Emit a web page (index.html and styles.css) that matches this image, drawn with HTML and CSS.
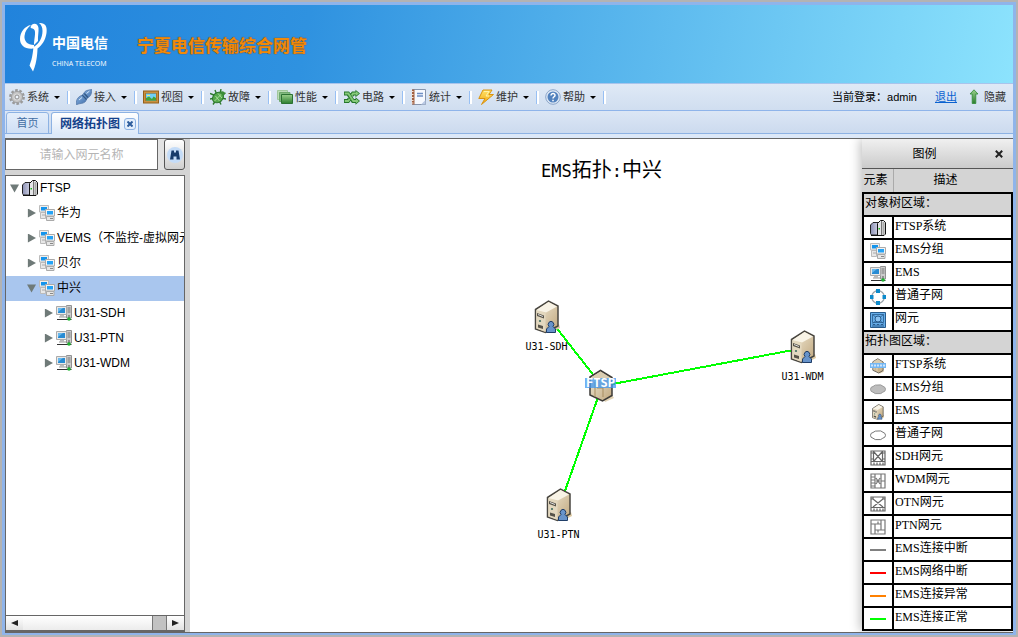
FILE: index.html
```html
<!DOCTYPE html>
<html lang="zh-CN">
<head>
<meta charset="utf-8">
<title>宁夏电信传输综合网管</title>
<link rel="stylesheet" href="styles.css">
</head>
<body>
<svg class="sprite" width="0" height="0" aria-hidden="true">
  <defs>
    <linearGradient id="beige" x1="0" y1="0" x2="1" y2="1"><stop offset="0" stop-color="#f3ecda"/><stop offset="1" stop-color="#bfa67c"/></linearGradient>
    <linearGradient id="steel" x1="0" y1="0" x2="1" y2="0"><stop offset="0" stop-color="#8b90b4"/><stop offset="1" stop-color="#d8daea"/></linearGradient>
    <linearGradient id="green" x1="0" y1="0" x2="0" y2="1"><stop offset="0" stop-color="#9ad08c"/><stop offset="1" stop-color="#2b7d2e"/></linearGradient>
    <linearGradient id="blue" x1="0" y1="0" x2="1" y2="1"><stop offset="0" stop-color="#9cc3ee"/><stop offset="1" stop-color="#2f5f9f"/></linearGradient>
    <linearGradient id="gold" x1="0" y1="0" x2="0" y2="1"><stop offset="0" stop-color="#ffe36a"/><stop offset="1" stop-color="#f2a50c"/></linearGradient>
  </defs>
  <symbol id="i-gear" viewBox="0 0 16 16">
    <circle cx="8" cy="8" r="6.6" fill="none" stroke="#9a9a9a" stroke-width="2.6" stroke-dasharray="2.6 1.55"/>
    <circle cx="8" cy="8" r="5.6" fill="#c4c4c4" stroke="#a0a0a0"/>
    <circle cx="8" cy="8" r="3.6" fill="#d9d9d9"/><circle cx="8" cy="8" r="2" fill="#eef4fb" stroke="#8f8f8f"/>
  </symbol>
  <symbol id="i-plug" viewBox="0 0 16 16">
    <path d="M.3 15.700C0 12 1 9 4 7.200L6.500 6 9 2.500C11 .8 14 1.200 15.700.300c0 2.500-.2 5-1.900 7L11 9.500l-1.500 3C7 15 4 14 .3 15.700z" fill="url(#blue)" stroke="#5579a8" stroke-width=".8"/>
    <path d="M6.300 6.200 10.500 10.500M8.300 4.500l3.700 4" stroke="#315784" stroke-width="1.200"/><path d="M10.500 4.500 13.500 2M3 11l3-2.500" stroke="#d5e7fb"/>
  </symbol>
  <symbol id="i-view" viewBox="0 0 16 16">
    <path d="M0 1.500h16v13H0z" fill="#94601c"/><path d="M1 2.500h14v11H1z" fill="#c9913f"/><path d="M2.500 4h11v8h-11z" fill="#8a5616"/>
    <path d="M3 4.500h10v7H3z" fill="#6fd0f5"/><path d="M3 11.500V9l3-1.500L9 10l1.500-2.500L13 9v2.500z" fill="#42a33b"/><path d="M4 6h3v1H4z" fill="#f3eb6c"/>
  </symbol>
  <symbol id="i-bug" viewBox="0 0 16 16">
    <path d="M0 4.500l5 2M5 1l1.500 4M11 0l-1 5M0 10l5-1M3 15.500l3-4.500M15.500 4 11 6M16 10 11 9M11 15.500l-2-4" stroke="#2d7a2c" stroke-width="1.400"/>
    <ellipse cx="8" cy="8.500" rx="6" ry="4.800" transform="rotate(-42 8 8.500)" fill="#54a84b" stroke="#2a732c"/>
    <path d="M4.500 12 11.500 5M5.500 7l4 5M8 4.500l4 4.500" stroke="#a8dc99" stroke-width="1"/>
    <path d="M10 4c1-3 5-2 5 1l-2 2z" fill="#3c8d39"/>
  </symbol>
  <symbol id="i-perf" viewBox="0 0 16 16">
    <path d="M.5 1.500h10v9H.5z" fill="#bcdcb7" stroke="#a0c79c"/><path d="M2.500 3.500h10.500v9H2.500z" fill="#82b97f" stroke="#6fa86d"/><path d="M4.500 5.500h11v9h-11z" fill="url(#green)" stroke="#2b7132"/>
  </symbol>
  <symbol id="i-shuffle" viewBox="0 0 16 16">
    <path d="M0 4.500h4l5 7.500h3M0 12h4l1.500-2M7.500 6.500 9 4.500h3" fill="none" stroke="#25762a" stroke-width="4"/>
    <path d="M11.500.8 16 4.500 11.500 8.200zM11.500 8.200 16 12l-4.500 3.700z" fill="#25762a"/>
    <path d="M.8 4.500h3.500l5 7.500h3M.8 12h3.500l1.500-2M7.700 6.500 9 4.500h3" fill="none" stroke="#86c97a" stroke-width="2"/>
    <path d="M12 2.300 15 4.500 12 6.700zM12 9.800l3 2.200-3 2.200z" fill="#86c97a"/>
  </symbol>
  <symbol id="i-report" viewBox="0 0 16 16">
    <path d="M1.500.5h13v15h-13z" fill="#f6f9ff" stroke="#8795ad"/><path d="M1 .5h2.500v15H1z" fill="#a36040"/><path d="M0 2.500h2.500M0 5.500h2.500M0 8.500h2.500M0 11.500h2.500M0 14h2.500" stroke="#efe2da"/>
    <path d="M6 4.500h6M6 7h6" stroke="#6f8fc4" stroke-width="1.400"/><path d="M10 15.500 14.500 11v4.500z" fill="#b9c9e4"/>
  </symbol>
  <symbol id="i-bolt" viewBox="0 0 16 16">
    <path d="M5 1h9l-3 4.500h4.500L3.500 15.500 7 9.500H.8z" fill="url(#gold)" stroke="#d99413"/>
    <path d="M6 2.500h5L8 7h3" fill="none" stroke="#fff3a8"/>
  </symbol>
  <symbol id="i-help" viewBox="0 0 16 16">
    <circle cx="8" cy="8" r="7.300" fill="#dfe9f6" stroke="#8aa5c9"/><circle cx="8" cy="8" r="5.500" fill="#5282be"/>
    <path d="M6 6.500C6 3.800 10.200 4 10 6.500 9.900 7.800 8 7.800 8 9.500M8 10.800v1.500" fill="none" stroke="#fff" stroke-width="1.500"/>
  </symbol>
  <symbol id="i-up" viewBox="0 0 16 16"><path d="M8 .8 12 5h-2.200v9.500H6.200V5H4z" fill="url(#green)" stroke="#2f8a35" stroke-width=".8"/></symbol>
  <symbol id="i-binoculars" viewBox="0 0 16 16">
    <circle cx="8" cy="8" r="8" fill="#c4dcf8"/><path d="M4.500 3.500H7v2h2v-2h2.500L13 12.500H9.500V9.500h-3v3H3z" fill="#173c6b"/>
  </symbol>
  <symbol id="i-system" viewBox="0 0 16 16">
    <path d="M.5 5 3 2.500h6V14L7.500 15h-6l-1-1.500z" fill="url(#steel)" stroke="#222"/>
    <path d="M7.500 3.500 10.500.5h3l2 2V14l-1.500 1.500H7.500z" fill="#e4e5e8" stroke="#111"/><path d="M11.500 1v14" stroke="#777"/><path d="M13.500 2v13" stroke="#aaa" stroke-width="2"/><path d="M8.500 8h1.500v1.500H8.500z" fill="#18b818"/>
    <path d="M1 15.500h7" stroke="#111"/>
  </symbol>
  <symbol id="i-group" viewBox="0 0 16 16">
    <path d="M.5.500h9v6.500h-9z" fill="#eee" stroke="#bcbcbc"/><path d="M2 2h6v3.500H2z" fill="#1494ec"/><path d="M1.500 7.500h5v6h-5z" fill="#e7e7e7" stroke="#bbb"/><path d="M3 10h3" stroke="#aaa"/>
    <path d="M6.500 4.500h9V11h-9z" fill="#f4f4f4" stroke="#aaa"/><path d="M8 6h6v3.500H8z" fill="#26a3f5"/><path d="M7.500 11.500h7.500v4H7.500z" fill="#e6e6e6" stroke="#aaa"/><path d="M11 13.500h3" stroke="#888"/>
  </symbol>
  <symbol id="i-ems" viewBox="0 0 16 16">
    <path d="M10.500.5h5v12.500h-5z" fill="#ccc" stroke="#929292"/><path d="M11.500 3h3M11.500 5h3M11.500 7h3" stroke="#777"/>
    <path d="M.5 1.500h10v8H.5z" fill="#e9e9e9" stroke="#aaa"/><path d="M2 3h7v5H2z" fill="#288bd3"/><path d="M2 3h5L2 7z" fill="#68b8ec"/>
    <path d="M4 10.500h4M3 12h7" stroke="#bbb" stroke-width="1.500"/><path d="M1 14.500h14.500" stroke="#333"/><path d="M13 10v5" stroke="#555"/><circle cx="13" cy="14" r="1.800" fill="#20b533"/>
  </symbol>
  <symbol id="i-subnet" viewBox="0 0 16 16">
    <circle cx="8" cy="8" r="6.300" fill="none" stroke="#9aa3aa" stroke-width="1.200"/>
    <path d="M6 0h4v4H6zM6 12h4v4H6zM0 6h3.500v4H0zM12.500 6H16v4h-3.500z" fill="#0d8acb"/>
  </symbol>
  <symbol id="i-ne" viewBox="0 0 16 16">
    <path d="M.5.500h15v15H.5z" fill="#67aeea" stroke="#285b8c"/><path d="M2.500 2.500h11v8h-11zM2.500 2.500l11 9M13.500 2.500l-11 9" fill="none" stroke="#285b8c" stroke-width=".8"/><circle cx="8" cy="7" r="3" fill="#8bc2f1" stroke="#285b8c"/><path d="M3 15v-2.500h2V15M7 15v-2.500h2V15M11 15v-2.500h2V15" fill="none" stroke="#285b8c"/>
  </symbol>
  <symbol id="i-server" viewBox="0 0 26 34">
    <path d="M19 27l6-3 1 4-8 4z" fill="#ddc9a2"/>
    <path d="M1.500 9.500 14.500 1 24 6v20l-12.500 6.500L1.500 29z" fill="url(#beige)" stroke="#484640" stroke-width="1.500"/>
    <path d="M2.500 10 14.500 2l8.500 4.500-11 6z" fill="#f8f3e6"/><path d="M11.500 13v19L2.300 28.500V10.500z" fill="#e3d8bf"/>
    <path d="M3 13l7 2.500v3L3 16zM4 24.500l5 1.500v3l-5-1.500z" fill="#575349"/><path d="M4 14.500l5 2" stroke="#ddd"/><circle cx="6" cy="21" r="1.100" fill="#3f6e61"/>
    <path d="M12.500 32.500v-3.500l2.500-2.500a2.800 3 0 1 1 4 0l2.500 2.500v3.500z" fill="#6793ca" stroke="#203e68"/>
  </symbol>
  <symbol id="i-core" viewBox="0 0 26 34">
    <path d="M15 29l9-3 2 3-9 4z" fill="#e2d3b4"/>
    <path d="M2 8 12.500 1.500 24 8.500v18L14.500 32 2 26z" fill="url(#beige)" stroke="#3d3b38" stroke-width="1.500"/>
    <path d="M3 8.500 12.500 2.500 22.500 9l-9 5z" fill="#d9cdb2"/><path d="M7 13v15M9 19h6v9" fill="none" stroke="#a78d61"/>
  </symbol>
  <symbol id="i-cloud" viewBox="0 0 16 16"><path d="M3 5.500Q5 3.500 8 4q3-.8 5 1.300 2.500.7 2.500 3t-2.700 2.900Q11 13.200 8 12.600 5 13.200 3 11.200.5 10.800.5 8.300T3 5.500z"/></symbol>
  <symbol id="i-sdh" viewBox="0 0 16 16">
    <path d="M1 1h14v14H1zM1 11.500h14M3.500 1v10M12.500 1v10M4 2l8 9M12 2l-8 9M4 15v-2.500M7 15v-2.500M10 15v-2.500M13 15v-2.500" fill="none" stroke="#666" stroke-width="1.200"/><path d="M1 3h3M12 3h3M1 9h3M12 9h3" stroke="#666"/>
  </symbol>
  <symbol id="i-wdm" viewBox="0 0 16 16"><path d="M1 1h14v14H1zM5 1v14M11 1v14M1 4h4M1 7h4M1 10h4M1 13h4M11 8h4M6 5l4 6M10 5l-4 6M6 8h4" fill="none" stroke="#777" stroke-width="1.200"/></symbol>
  <symbol id="i-otn" viewBox="0 0 16 16"><path d="M1 1h14v14H1zM1 11.500h14M3 3l10 8M13 3 3 11M4 15v-2.500M7 15v-2.500M10 15v-2.500M13 15v-2.500M1 3h2V1M13 1v2h2" fill="none" stroke="#666" stroke-width="1.200"/></symbol>
  <symbol id="i-ptn" viewBox="0 0 16 16"><path d="M1 1h14v14H1zM5 5h6v6H5zM8 5V2.500M5 5H1M11 5V1M11 11h4M5 11v4M8 11v2.500" fill="none" stroke="#777" stroke-width="1.200"/></symbol>
</svg>

<div class="app">
  <header class="banner">
    <div class="brand">
      <svg class="brand-mark" width="28" height="50" viewBox="0 0 28 50" aria-hidden="true" fill="#fff">
        <path d="M11 3C5 4 0 10 0 17c0 6.500 5 10.500 14 9.500V23C7.500 23 4 19 4.500 14 5 9 7.500 6 11 3z"/>
        <path d="M10.500 5.500C11 .5 18 0 18.500 6c.3 4-.8 8-.5 13l-4 4C14 17 16 11 14.500 8c-1-2-3-1-4-2.500z"/>
        <path d="M19 1c6-.5 8.500 3 7.500 10-1 7-4.500 12.500-9 15.500-.2 8-1.500 15-3 19L13 49.500l-3.500-6 2-6c1-4 1.500-8 2-12.500C19 22 22.500 16 22.500 9c0-3.500-1-6-3.500-8z"/>
      </svg>
      <div class="brand-text"><span class="brand-cn">中国电信</span><span class="brand-en">CHINA TELECOM</span></div>
    </div>
    <h1 class="banner-title">宁夏电信传输综合网管</h1>
  </header>

  <nav class="toolbar">
    <button class="menu"><svg class="icon"><use href="#i-gear"/></svg>系统<i class="caret"></i></button>
    <button class="menu"><svg class="icon"><use href="#i-plug"/></svg>接入<i class="caret"></i></button>
    <button class="menu"><svg class="icon"><use href="#i-view"/></svg>视图<i class="caret"></i></button>
    <button class="menu"><svg class="icon"><use href="#i-bug"/></svg>故障<i class="caret"></i></button>
    <button class="menu"><svg class="icon"><use href="#i-perf"/></svg>性能<i class="caret"></i></button>
    <button class="menu"><svg class="icon"><use href="#i-shuffle"/></svg>电路<i class="caret"></i></button>
    <button class="menu"><svg class="icon"><use href="#i-report"/></svg>统计<i class="caret"></i></button>
    <button class="menu"><svg class="icon"><use href="#i-bolt"/></svg>维护<i class="caret"></i></button>
    <button class="menu"><svg class="icon"><use href="#i-help"/></svg>帮助<i class="caret"></i></button>
    <div class="session">
      <span class="user">当前登录：admin</span>
      <a class="logout" href="#">退出</a>
      <button class="hide"><svg class="icon"><use href="#i-up"/></svg>隐藏</button>
    </div>
  </nav>

  <div class="tabs">
    <button class="tab">首页</button>
    <div class="tab tab-active"><span>网络拓扑图</span>
      <button class="tab-close" aria-label="关闭"><svg width="6" height="6" viewBox="0 0 6 6"><path d="M.5.500l5 5M5.500.500l-5 5" stroke="#2d5c9c" stroke-width="2"/></svg></button>
    </div>
  </div>

  <main class="work">
    <aside class="side">
      <form class="search">
        <input class="search-box" type="text" placeholder="请输入网元名称" aria-label="请输入网元名称">
        <button class="search-go" type="button" aria-label="搜索"><svg class="icon"><use href="#i-binoculars"/></svg></button>
      </form>
      <div class="tree-panel">
        <ul class="tree">
          <li class="node level-0"><i class="fold open"></i><svg class="icon"><use href="#i-system"/></svg>FTSP</li>
          <li class="node level-1"><i class="fold"></i><svg class="icon"><use href="#i-group"/></svg>华为</li>
          <li class="node level-1"><i class="fold"></i><svg class="icon"><use href="#i-group"/></svg>VEMS（不监控-虚拟网元</li>
          <li class="node level-1"><i class="fold"></i><svg class="icon"><use href="#i-group"/></svg>贝尔</li>
          <li class="node level-1 selected"><i class="fold open"></i><svg class="icon"><use href="#i-group"/></svg>中兴</li>
          <li class="node level-2"><i class="fold"></i><svg class="icon"><use href="#i-ems"/></svg>U31-SDH</li>
          <li class="node level-2"><i class="fold"></i><svg class="icon"><use href="#i-ems"/></svg>U31-PTN</li>
          <li class="node level-2"><i class="fold"></i><svg class="icon"><use href="#i-ems"/></svg>U31-WDM</li>
        </ul>
        <div class="scrollbar">
          <button class="scroll-end" aria-label="向左"><i class="arrow-left"></i></button>
          <div class="scroll-track"><div class="scroll-thumb"></div></div>
          <button class="scroll-end" aria-label="向右"><i class="arrow-right"></i></button>
        </div>
      </div>
    </aside>

    <section class="canvas">
      <h2 class="canvas-title"><span class="latin">EMS</span>拓扑<span class="latin">:</span>中兴</h2>
      <div class="map">
        <svg class="links" width="1" height="1"><path d="M0 0-54-69M0 0 202-38M0 0-42 119" stroke="#0f0" stroke-width="2" fill="none" shape-rendering="crispEdges"/></svg>
        <div class="device sdh"><svg class="server"><use href="#i-server"/></svg><span>U31-SDH</span></div>
        <div class="device wdm"><svg class="server"><use href="#i-server"/></svg><span>U31-WDM</span></div>
        <div class="device ptn"><svg class="server"><use href="#i-server"/></svg><span>U31-PTN</span></div>
        <div class="device core"><svg class="server"><use href="#i-core"/></svg><b class="core-label">FTSP</b></div>
      </div>

      <aside class="legend">
        <div class="legend-head"><span class="legend-name">图例</span><button class="legend-close" aria-label="关闭"><svg width="8" height="8" viewBox="0 0 8 8"><path d="M.8.800l6.400 6.400M7.200.800.8 7.200" stroke="#222" stroke-width="2"/></svg></button></div>
        <div class="legend-cols"><span class="col-icon">元素</span><span class="col-text">描述</span></div>
        <table class="legend-table">
          <tr><th colspan="2">对象树区域：</th></tr>
          <tr><td class="pic"><svg class="icon"><use href="#i-system"/></svg></td><td>FTSP系统</td></tr>
          <tr><td class="pic"><svg class="icon"><use href="#i-group"/></svg></td><td>EMS分组</td></tr>
          <tr><td class="pic"><svg class="icon"><use href="#i-ems"/></svg></td><td>EMS</td></tr>
          <tr><td class="pic"><svg class="icon"><use href="#i-subnet"/></svg></td><td>普通子网</td></tr>
          <tr><td class="pic"><svg class="icon"><use href="#i-ne"/></svg></td><td>网元</td></tr>
          <tr><th colspan="2">拓扑图区域：</th></tr>
          <tr><td class="pic"><svg class="icon" viewBox="0 0 16 16"><use href="#i-core" x="1" width="14" height="16"/><path d="M0 5h16v5H0z" fill="#74b7f3"/><path d="M1 7.500h14" stroke="#cfe6fb" stroke-width="2" stroke-dasharray="2 1"/></svg></td><td>FTSP系统</td></tr>
          <tr><td class="pic"><svg class="icon cloud-solid"><use href="#i-cloud"/></svg></td><td>EMS分组</td></tr>
          <tr><td class="pic"><svg class="icon"><use href="#i-server"/></svg></td><td>EMS</td></tr>
          <tr><td class="pic"><svg class="icon cloud-line"><use href="#i-cloud"/></svg></td><td>普通子网</td></tr>
          <tr><td class="pic"><svg class="icon"><use href="#i-sdh"/></svg></td><td>SDH网元</td></tr>
          <tr><td class="pic"><svg class="icon"><use href="#i-wdm"/></svg></td><td>WDM网元</td></tr>
          <tr><td class="pic"><svg class="icon"><use href="#i-otn"/></svg></td><td>OTN网元</td></tr>
          <tr><td class="pic"><svg class="icon"><use href="#i-ptn"/></svg></td><td>PTN网元</td></tr>
          <tr><td class="pic"><i class="line line-gray"></i></td><td>EMS连接中断</td></tr>
          <tr><td class="pic"><i class="line line-red"></i></td><td>EMS网络中断</td></tr>
          <tr><td class="pic"><i class="line line-orange"></i></td><td>EMS连接异常</td></tr>
          <tr><td class="pic"><i class="line line-green"></i></td><td>EMS连接正常</td></tr>
        </table>
      </aside>
    </section>
  </main>
</div>
</body>
</html>
```

FILE: styles.css
```css
* { box-sizing: border-box; }

body {
  margin: 0;
  font: 12px/16px "Liberation Sans", "Noto Sans CJK SC", sans-serif;
  color: #000;
}

button {
  margin: 0;
  padding: 0;
  border: 0;
  background: none;
  font: inherit;
  color: inherit;
}

.sprite { position: absolute; }

.icon {
  display: block;
  flex: none;
  width: 16px;
  height: 16px;
}

.app {
  display: flex;
  flex-direction: column;
  height: 100vh;
  border: 2px solid #b3b3b3;
  padding: 3px 3px 2px;
  background: #8fb4ea;
}

/* banner */
.banner {
  flex: none;
  display: flex;
  align-items: center;
  gap: 28px;
  height: 78px;
  padding: 6px 15px 0;
  background: linear-gradient(100deg, #2183dc, #2f92e0 30%, #8ce3fd);
}

.brand { display: flex; gap: 4px; color: #fff; }
.brand-text { display: flex; flex-direction: column; width: 57px; padding-top: 8px; }
.brand-cn { font: bold 14px/28px "Liberation Serif", "Noto Sans CJK SC", serif; }
.brand-en { font: 7px/12px "Open Sans", sans-serif; white-space: nowrap; }

.banner-title {
  margin: 0;
  font: bold 17px/34px "Liberation Sans", "Noto Sans CJK SC", sans-serif;
  color: #f08a0a;
  text-shadow: 0 0 1px #6b4a2a, 0 0 1px #6b4a2a;
}

/* toolbar */
.toolbar {
  flex: none;
  display: flex;
  align-items: center;
  height: 28px;
  border-top: 1px solid #a8c4ec;
  border-bottom: 1px solid #8fb4ea;
  background: linear-gradient(#dfe9f6, #d0def0);
  font-size: 11px;
  color: #333;
}

.menu {
  display: flex;
  align-items: center;
  gap: 2px;
  width: 67px;
  padding: 0 2px 0 4px;
}

.menu::after {
  content: "";
  margin-left: auto;
  width: 2px;
  height: 13px;
  border-left: 1px solid #98c0f4;
  background: #fff;
}

.caret {
  margin-left: 3px;
  border: 3px solid transparent;
  border-top-color: #000;
  border-bottom: 0;
}

.session {
  display: flex;
  align-items: center;
  gap: 9px;
  margin-left: auto;
  padding-right: 7px;
}

.user { margin-right: 9px; color: #000; }
.logout { color: #0a62d0; }
.hide { display: flex; align-items: center; gap: 2px; }

/* tabs */
.tabs {
  flex: none;
  display: flex;
  align-items: flex-end;
  gap: 2px;
  height: 27px;
  padding: 0 1px;
  border-bottom: 4px solid #dce8f8;
  background: linear-gradient(#dce6f5, #cbdaee);
  box-shadow: inset 0 -1px #8db2e3;
}

.tab {
  display: flex;
  align-items: center;
  justify-content: center;
  width: 43px;
  height: 22px;
  border: 1px solid #8db2e3;
  border-radius: 3px 3px 0 0;
  background: linear-gradient(#e4eefb, #cfdff5);
  font-size: 11px;
  color: #416da3;
}

.tab-active {
  justify-content: space-between;
  width: 88px;
  padding: 0 2px 0 8px;
  border-bottom: 0;
  background: linear-gradient(#fff, #dce8f8);
  font-size: 12px;
  font-weight: bold;
  color: #15428b;
}

.tab-close {
  display: grid;
  place-items: center;
  width: 12px;
  height: 12px;
  border: 1px solid #8db2e3;
  border-radius: 3px;
  background: #e3eefc;
}

/* work area */
.work {
  flex: 1;
  display: flex;
  min-height: 0;
  border-top: 1px solid #666;
  border-bottom: 1px solid #666;
  background: #fff;
}

.side {
  flex: none;
  display: flex;
  flex-direction: column;
  gap: 5px;
  width: 185px;
  padding-right: 5px;
  background: #d4d4d4;
}

.search { display: flex; gap: 6px; height: 31px; background: #e2e2e2; }

.search-box {
  flex: 1;
  min-width: 0;
  border: 1px solid #666;
  padding: 0;
  background: #fff;
  font: inherit;
  text-align: center;
}

.search-box::placeholder { color: #b5b5b5; }

.search-go {
  display: grid;
  place-items: center;
  width: 21px;
  border: 1px solid #555;
  border-radius: 3px;
  background: linear-gradient(#fff, #cfcfcf);
}

.tree-panel {
  flex: 1;
  display: flex;
  flex-direction: column;
  min-height: 0;
  border: 1px solid #666;
  background: #fff;
}

.tree {
  flex: 1;
  min-height: 0;
  overflow: hidden;
  margin: 0;
  padding: 0;
  list-style: none;
}

.node {
  display: flex;
  align-items: center;
  height: 25px;
  padding-bottom: 1px;
  white-space: nowrap;
  overflow: hidden;
}

.node .icon { margin: 0 2px 0 3px; }
.level-0 { padding-left: 4px; }
.level-1 { padding-left: 21px; }
.level-2 { padding-left: 38px; }
.selected { background: #a9c6ee; }

.fold {
  flex: none;
  width: 9px;
  height: 9px;
  background: #6f7a78;
  clip-path: polygon(10% 0, 100% 50%, 10% 100%);
}

.open { clip-path: polygon(0 10%, 100% 10%, 50% 100%); }

.scrollbar {
  flex: none;
  display: flex;
  height: 16px;
  border-top: 1px solid #666;
  border-bottom: 1px solid #666;
}

.scroll-end {
  display: grid;
  place-items: center;
  width: 17px;
  background: linear-gradient(#fff, #e2e2e2);
}

.scroll-track { flex: 1; background: #c2c2c2; border-right: 1px solid #777; }
.scroll-thumb { width: 91%; height: 100%; border-right: 1px solid #777; background: linear-gradient(#fff, #ececec); }
.arrow-left, .arrow-right { border: 3px solid transparent; }
.arrow-left { border-right: 7px solid #222; border-left: 0; }
.arrow-right { border-left: 7px solid #222; border-right: 0; }

/* topology */
.canvas { position: relative; flex: 1; min-width: 0; overflow: hidden; background: #fff; }

.canvas-title {
  margin: 0;
  padding-top: 15px;
  font: 20px/30px "Noto Sans CJK SC", sans-serif;
  text-align: center;
}

.latin { font: 17px/30px "DejaVu Sans Mono", monospace; }

.map { position: absolute; left: 50%; top: 50%; }
.links { position: absolute; left: 0; top: 0; overflow: visible; }

.device {
  position: absolute;
  display: flex;
  flex-direction: column;
  align-items: center;
  gap: 5px;
  width: 60px;
  margin: -17px 0 0 -31px;
  font: 10px/16px "DejaVu Sans Mono", monospace;
}

.server { display: block; width: 26px; height: 34px; }
.sdh { left: -54px; top: -69px; }
.wdm { left: 202px; top: -39px; }
.ptn { left: -42px; top: 119px; }
.core { left: 0; top: 0; }

.core-label {
  position: absolute;
  top: 9px;
  padding: 0 1px;
  background: rgba(64, 152, 240, .75);
  font: bold 12px/10px "DejaVu Sans Mono", monospace;
  color: #fff;
}

/* legend */
.legend {
  position: absolute;
  right: 0;
  top: 0;
  width: 151px;
  background: #d4d4d4;
  box-shadow: -2px 0 10px rgba(0, 0, 0, .25);
}

.legend-head {
  display: flex;
  align-items: center;
  height: 30px;
  padding: 0 10px 0 0;
  border-bottom: 1px solid #555;
  background: linear-gradient(#f0f0f0, #cbcbcb);
}

.legend-name { flex: 1; padding-right: 8px; text-align: center; }
.legend-close { display: grid; place-items: center; }
.legend-cols { display: flex; height: 23px; line-height: 23px; text-align: center; }
.col-icon { width: 32px; padding-right: 4px; border-right: 1px solid #aaa; white-space: nowrap; }
.col-text { flex: 1; padding-right: 16px; }

.legend-table {
  width: 100%;
  border-collapse: collapse;
  background: #fff;
  font: 12px/16px "Liberation Serif", "Noto Sans CJK SC", serif;
}

.legend-table td, .legend-table th {
  height: 23px;
  padding: 0 1px 3px;
  border: 2px solid #000;
  font-weight: normal;
  text-align: left;
}

.legend-table th { background: #d4d4d4; }
.legend-table .pic { width: 30px; padding: 0 6px; }
.cloud-solid { fill: #bdbdbd; stroke: #999; }
.cloud-line { fill: #fff; stroke: #777; }
.line { display: block; width: 16px; height: 2px; }
.line-gray { background: #808080; }
.line-red { background: #f00; }
.line-orange { background: #ff8000; }
.line-green { background: #0f0; }
```
